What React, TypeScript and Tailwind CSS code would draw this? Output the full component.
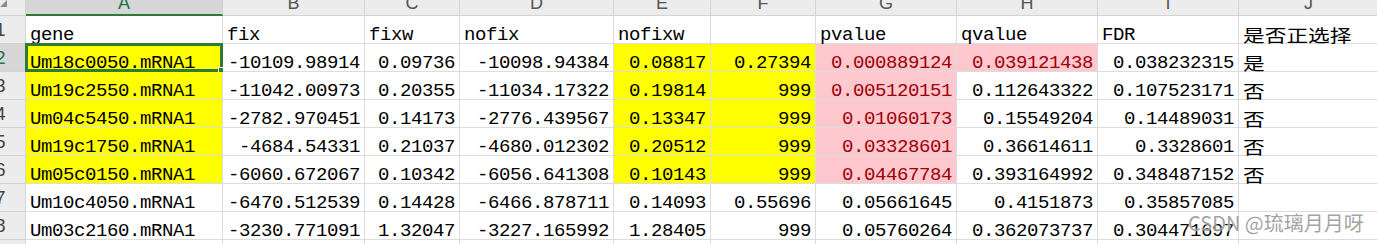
import React from "react";

type Col = { letter: string; w: string };

const COLS: Col[] = [
  { letter: "A", w: "w-[197px]" },
  { letter: "B", w: "w-[142px]" },
  { letter: "C", w: "w-[95px]" },
  { letter: "D", w: "w-[154px]" },
  { letter: "E", w: "w-[97px]" },
  { letter: "F", w: "w-[105px]" },
  { letter: "G", w: "w-[141px]" },
  { letter: "H", w: "w-[141px]" },
  { letter: "I", w: "w-[141px]" },
  { letter: "J", w: "w-[140px]" },
];

const HEAD = ["gene", "fix", "fixw", "nofix", "nofixw", "", "pvalue", "qvalue", "FDR", "是否正选择"];

const DATA: string[][] = [
  ["Um18c0050.mRNA1", "-10109.98914", "0.09736", "-10098.94384", "0.08817", "0.27394", "0.000889124", "0.039121438", "0.038232315", "是"],
  ["Um19c2550.mRNA1", "-11042.00973", "0.20355", "-11034.17322", "0.19814", "999", "0.005120151", "0.112643322", "0.107523171", "否"],
  ["Um04c5450.mRNA1", "-2782.970451", "0.14173", "-2776.439567", "0.13347", "999", "0.01060173", "0.15549204", "0.14489031", "否"],
  ["Um19c1750.mRNA1", "-4684.54331", "0.21037", "-4680.012302", "0.20512", "999", "0.03328601", "0.36614611", "0.3328601", "否"],
  ["Um05c0150.mRNA1", "-6060.672067", "0.10342", "-6056.641308", "0.10143", "999", "0.04467784", "0.393164992", "0.348487152", "否"],
  ["Um10c4050.mRNA1", "-6470.512539", "0.14428", "-6466.878711", "0.14093", "0.55696", "0.05661645", "0.4151873", "0.35857085", ""],
  ["Um03c2160.mRNA1", "-3230.771091", "1.32047", "-3227.165992", "1.28405", "999", "0.05760264", "0.362073737", "0.304471697", ""],
  ["", "", "", "", "", "", "", "", "", ""],
];

function cellBg(row: number, col: number): string {
  // row: spreadsheet row number, col: 0 = A
  if (row >= 2 && row <= 6) {
    if (col === 0 || col === 4 || col === 5) return "bg-[#ffff00]";
    if (col === 6) return "bg-[#ffc7ce]";
    if (col === 7 && row === 2) return "bg-[#ffc7ce]";
  }
  return "bg-white";
}

function isRed(row: number, col: number): boolean {
  if (row >= 2 && row <= 6 && col === 6) return true;
  if (row === 2 && col === 7) return true;
  return false;
}

function CjkText({ text }: { text: string }) {
  return (
    <span className="inline-block w-0 whitespace-nowrap">
      <span className="inline-block origin-left scale-x-[1.24] font-['Noto_Sans_CJK_SC',sans-serif] text-[17.5px] tracking-normal">
        {text}
      </span>
    </span>
  );
}

function Cell({ row, col, value }: { row: number; col: number; value: string }) {
  const c = COLS[col];
  const bg = cellBg(row, col);
  const red = isRed(row, col);
  const numeric = row >= 2 && col >= 1 && col <= 8;
  const selected = row === 2 && col === 0;
  return (
    <div
      className={`relative h-[28px] shrink-0 border-r border-b border-[#dcdcdc] ${c.w} ${bg} ${
        numeric ? "justify-end" : "justify-start"
      } flex items-start px-[4px] pt-[9px]`}
    >
      {col === 9 && value ? (
        <span className="leading-[20px]">
          <CjkText text={value} />
        </span>
      ) : (
        <span className={`whitespace-nowrap leading-[20px] ${red ? "text-[#9c0006]" : "text-black"}`}>{value}</span>
      )}
      {selected && (
        <div className="pointer-events-none absolute -top-[1px] -left-[1px] -right-[1px] -bottom-[1px] border-[3px] border-[#2f7a34]">
          <div className="absolute -right-[5px] -bottom-[5px] h-[7px] w-[7px] border border-white bg-[#2f7a34]" />
        </div>
      )}
    </div>
  );
}

function RowHeader({ n }: { n: number }) {
  const active = n === 2;
  return (
    <div
      className={`h-[28px] w-[26px] shrink-0 border-r border-b border-[#d4d4d4] ${
        active ? "bg-[#d6d6d6] text-[#217346]" : "bg-[#ececec] text-[#444444]"
      } overflow-hidden pt-[4px]`}
    >
      <div className="-ml-[5px] font-['Liberation_Sans',sans-serif] text-[19px] leading-[20px] tracking-normal">{n}</div>
    </div>
  );
}

export default function App() {
  return (
    <div className="relative h-[244px] w-[1377px] overflow-hidden bg-white font-['Liberation_Mono',monospace] text-[19px] tracking-[-0.4px] text-black">
      {/* Column header row */}
      <div className="flex h-[16px]">
        <div className="relative h-[16px] w-[26px] shrink-0 border-r border-b border-[#d4d4d4] bg-[#ececec]">
          <svg className="absolute left-0 top-0" width="7" height="7" viewBox="0 0 7 7">
            <polygon points="7,0 7,7 0,7" fill="#8a8a8a" />
          </svg>
        </div>
        {COLS.map((c, i) => (
          <div
            key={c.letter}
            className={`h-[16px] shrink-0 overflow-hidden ${c.w} ${
              i === 0
                ? "border-r border-b-2 border-r-[#cfcfcf] border-b-[#2f7a34] bg-[#d6d6d6] text-[#217346]"
                : "border-r border-b border-[#d4d4d4] bg-[#ececec] text-[#555555]"
            } flex justify-center`}
          >
            <div className="-mt-[6px] font-['Liberation_Sans',sans-serif] text-[18px] leading-[18px] tracking-normal">{c.letter}</div>
          </div>
        ))}
      </div>

      {/* Row 1: headers */}
      <div className="flex">
        <RowHeader n={1} />
        {HEAD.map((h, i) => (
          <div
            key={i}
            className={`h-[28px] shrink-0 border-r border-b border-[#dcdcdc] bg-white ${COLS[i].w} flex items-start justify-start px-[4px] pt-[9px]`}
          >
            {i === 9 ? (
              <span className="leading-[20px]">
                <CjkText text={h} />
              </span>
            ) : (
              <span className="whitespace-nowrap leading-[20px]">{h}</span>
            )}
          </div>
        ))}
      </div>

      {/* Data rows */}
      {DATA.map((r, ri) => {
        const rowNum = ri + 2;
        return (
          <div key={rowNum} className="flex">
            <RowHeader n={rowNum} />
            {r.map((v, ci) => (
              <Cell key={ci} row={rowNum} col={ci} value={v} />
            ))}
          </div>
        );
      })}

      {/* Watermark */}
      <div className="pointer-events-none absolute left-[1188px] top-[213px] whitespace-nowrap font-['Noto_Sans_CJK_SC',sans-serif] text-[20px] leading-[20px] tracking-normal text-[#8a8a8a]/80 [text-shadow:0_0_2px_#ffffff]">
        CSDN @琉璃月月呀
      </div>
    </div>
  );
}
